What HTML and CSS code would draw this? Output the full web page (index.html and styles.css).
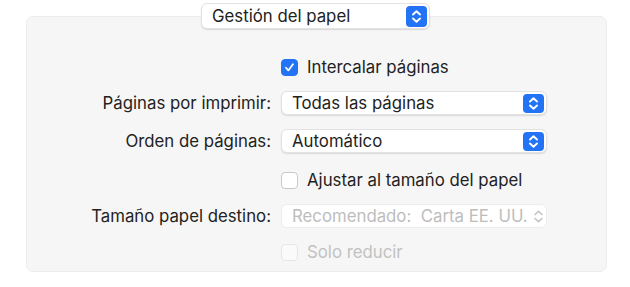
FILE: index.html
```html
<!DOCTYPE html>
<html lang="es">
<head>
  <meta charset="UTF-8" />
  <title>Gestión del papel</title>
  <link rel="stylesheet" href="styles.css">
</head>
<body>

  <div class="sheet">
    <div class="popup top-popup">
      <span class="popup-text">Gestión del papel</span>
      <span class="stepper">
        <svg width="21" height="21" viewBox="0 0 21 21"><path d="M7 8.5l3.5-3.2 3.5 3.2M7 12.5l3.5 3.2 3.5-3.2" fill="none" stroke="#fff" stroke-width="1.9" stroke-linecap="round" stroke-linejoin="round"/></svg>
      </span>
    </div>

    <div class="panel">
      <div class="form">
        <div class="label"></div>
        <div class="check-row">
          <span class="checkbox checked">
            <svg width="17" height="17" viewBox="0 0 17 17"><path d="M4.5 8.8l2.7 3 5.2-7" fill="none" stroke="#fff" stroke-width="2" stroke-linecap="round" stroke-linejoin="round"/></svg>
          </span>
          <span>Intercalar páginas</span>
        </div>

        <div class="label">Páginas por imprimir:</div>
        <div class="popup">
          <span class="popup-text">Todas las páginas</span>
          <span class="stepper">
            <svg width="21" height="19" viewBox="0 0 21 19"><path d="M7 7.5l3.5-3.2 3.5 3.2M7 11.5l3.5 3.2 3.5-3.2" fill="none" stroke="#fff" stroke-width="1.9" stroke-linecap="round" stroke-linejoin="round"/></svg>
          </span>
        </div>

        <div class="label">Orden de páginas:</div>
        <div class="popup">
          <span class="popup-text">Automático</span>
          <span class="stepper">
            <svg width="21" height="19" viewBox="0 0 21 19"><path d="M7 7.5l3.5-3.2 3.5 3.2M7 11.5l3.5 3.2 3.5-3.2" fill="none" stroke="#fff" stroke-width="1.9" stroke-linecap="round" stroke-linejoin="round"/></svg>
          </span>
        </div>

        <div class="label"></div>
        <div class="check-row spaced">
          <span class="checkbox"></span>
          <span>Ajustar al tamaño del papel</span>
        </div>

        <div class="label">Tamaño papel destino:</div>
        <div class="popup disabled">
          <span class="popup-text">Recomendado:&nbsp; Carta EE. UU.</span>
          <span class="stepper plain">
            <svg width="21" height="19" viewBox="0 0 21 19"><path d="M7 7.5l3.5-3.2 3.5 3.2M7 11.5l3.5 3.2 3.5-3.2" fill="none" stroke="#c4c4c4" stroke-width="1.6" stroke-linecap="round" stroke-linejoin="round"/></svg>
          </span>
        </div>

        <div class="label"></div>
        <div class="check-row disabled">
          <span class="checkbox"></span>
          <span>Solo reducir</span>
        </div>
      </div>
    </div>
  </div>

</body>
</html>
```

FILE: styles.css
```css
body {
  margin: 0;
  background: #ffffff;
  font-family: 'Inter', 'Liberation Sans', sans-serif;
  font-size: 16.8px;
  color: #222222;
}

.sheet {
  position: relative;
  padding-top: 16px;
}

.panel {
  margin: 0 23px 0 26px;
  background: #f6f6f6;
  border: 1px solid #ececec;
  border-radius: 7px;
  padding: 40px 0 9px;
}

.form {
  display: grid;
  grid-template-columns: 244px 266px;
  column-gap: 10px;
  row-gap: 14px;
  align-items: center;
}

.label {
  text-align: right;
}

.check-row {
  display: flex;
  align-items: center;
  gap: 9px;
  height: 20px;
}

.check-row.spaced {
  margin-top: 3px;
}

.checkbox {
  width: 15px;
  height: 15px;
  border: 1px solid #c9c9c9;
  border-radius: 4px;
  background: #fff;
  display: flex;
  align-items: center;
  justify-content: center;
}

.checkbox.checked {
  background: #2273f5;
  border-color: #2273f5;
}

.check-row.disabled {
  color: #c2c2c2;
}

.check-row.disabled .checkbox {
  border-color: #e6e6e6;
  background: #fafafa;
}

.popup {
  height: 22px;
  background: #fff;
  border: 1px solid #e2e2e2;
  border-radius: 6px;
  box-shadow: 0 1px 1.5px rgba(0, 0, 0, 0.12);
  display: flex;
  align-items: center;
  justify-content: space-between;
  padding: 0 2px 0 10px;
}

.popup-text {
  white-space: nowrap;
}

.stepper {
  width: 21px;
  height: 19px;
  background: #2273f5;
  border-radius: 4px;
  display: flex;
}

.stepper.plain {
  background: none;
}

.popup.disabled {
  color: #bdbdbd;
  box-shadow: none;
  border-color: #ececec;
}

.top-popup {
  position: absolute;
  top: 3px;
  left: 201px;
  width: 215px;
  height: 24px;
}

.top-popup .stepper {
  height: 21px;
}
```
